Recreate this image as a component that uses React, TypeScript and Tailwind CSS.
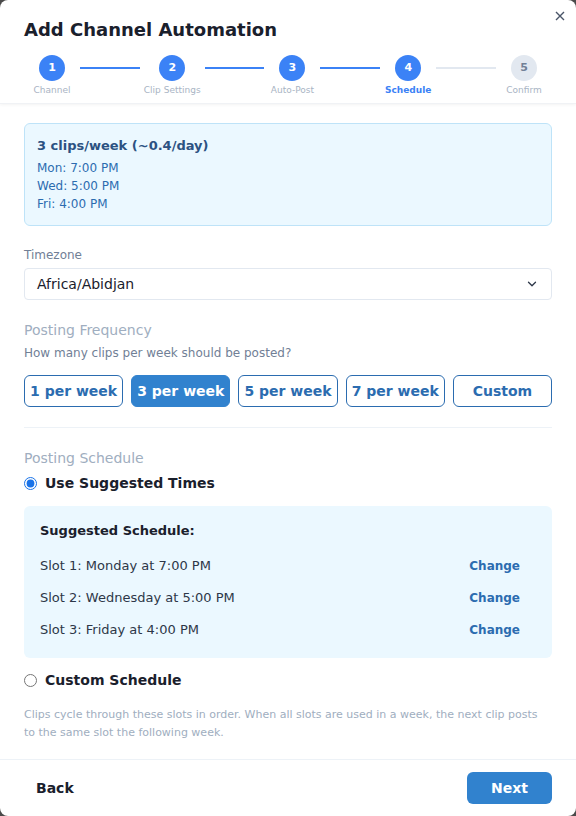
import { ChevronDown } from 'lucide-react';

const steps = [
    { n: 1, label: 'Channel', state: 'done' },
    { n: 2, label: 'Clip Settings', state: 'done' },
    { n: 3, label: 'Auto-Post', state: 'done' },
    { n: 4, label: 'Schedule', state: 'active' },
    { n: 5, label: 'Confirm', state: 'todo' },
];

const frequencies = ['1 per week', '3 per week', '5 per week', '7 per week', 'Custom'];

const slots = [
    'Slot 1: Monday at 7:00 PM',
    'Slot 2: Wednesday at 5:00 PM',
    'Slot 3: Friday at 4:00 PM',
];

const Stepper = () => (
    <div className="mt-[12px] flex items-start">
        {steps.map((s, i) => (
            <div key={s.n} className="contents">
                <div className="flex min-w-14 flex-col items-center px-1">
                    <div
                        className={
                            s.state === 'todo'
                                ? 'flex h-[26px] w-[26px] items-center justify-center rounded-full bg-[#e2e8f0] text-[11px] font-bold text-[#718096]'
                                : 'flex h-[26px] w-[26px] items-center justify-center rounded-full bg-[#3b82f6] text-[11px] font-bold text-white'
                        }
                    >
                        {s.n}
                    </div>
                    <span
                        className={
                            s.state === 'active'
                                ? 'mt-[3px] text-[9px] leading-[12px] font-bold text-[#3b82f6]'
                                : 'mt-[3px] text-[9px] leading-[12px] text-[#a9b4c4]'
                        }
                    >
                        {s.label}
                    </span>
                </div>
                {i < steps.length - 1 && (
                    <div
                        className={
                            i < 3
                                ? 'mt-3 h-[2px] flex-1 bg-[#3b82f6]'
                                : 'mt-3 h-[2px] flex-1 bg-[#e2e8f0]'
                        }
                    />
                )}
            </div>
        ))}
    </div>
);

const Radio = ({ checked, label }: { checked: boolean; label: string }) => (
    <label className="flex items-center gap-2 text-[14px] leading-[20px] font-bold text-[#1a202c]">
        <input type="radio" checked={checked} readOnly className="m-0 h-[13px] w-[13px] accent-[#1a73e8]" />
        {label}
    </label>
);

export default function App() {
    return (
        <div className="min-h-screen bg-[#4a4a4a] font-['DejaVu_Sans',sans-serif]">
            <div className="flex h-[816px] w-[576px] flex-col overflow-hidden rounded-lg bg-white">
                {/* Header */}
                <div className="relative border-b border-[#f0f2f5] px-6 pt-[17px] pb-[7px] shadow-[0_1px_3px_rgba(0,0,0,0.05)]">
                    <h1 className="text-[18px] leading-[26px] font-bold text-[#1a202c]">Add Channel Automation</h1>
                    <button className="absolute top-[11px] right-[11px]">
                        <svg width="10" height="10" viewBox="0 0 10 10">
                            <path d="M1 1L9 9M9 1L1 9" stroke="#4a5568" strokeWidth="1.4" />
                        </svg>
                    </button>
                    <Stepper />
                </div>

                {/* Body */}
                <div className="flex-1 px-6 pt-[19px]">
                    <div className="rounded-md border border-[#bee3f8] bg-[#ebf8ff] px-3 pt-[13px] pb-3">
                        <p className="text-[13px] leading-[18px] font-bold text-[#2c5282]">3 clips/week (~0.4/day)</p>
                        <div className="mt-1 text-[12px] leading-[18px] text-[#2b6cb0]">
                            <p>Mon: 7:00 PM</p>
                            <p>Wed: 5:00 PM</p>
                            <p>Fri: 4:00 PM</p>
                        </div>
                    </div>

                    <p className="mt-5 text-[12px] leading-[18px] text-[#718096]">Timezone</p>
                    <div className="mt-1 flex h-8 items-center justify-between rounded border border-[#e2e8f0] px-3">
                        <span className="text-[14px] text-[#1a202c]">Africa/Abidjan</span>
                        <ChevronDown size={14} strokeWidth={2.25} className="text-[#2d3748]" />
                    </div>

                    <p className="mt-5 text-[14px] leading-[20px] text-[#a0aec0]">Posting Frequency</p>
                    <p className="mt-1 text-[12px] leading-[18px] text-[#718096]">How many clips per week should be posted?</p>
                    <div className="mt-[13px] flex gap-2">
                        {frequencies.map((f) => (
                            <button
                                key={f}
                                className={
                                    f === '3 per week'
                                        ? 'h-8 flex-1 rounded-md border border-[#3182ce] bg-[#3182ce] text-[14px] font-bold text-white'
                                        : 'h-8 flex-1 rounded-md border border-[#2b6cb0] bg-white text-[14px] font-bold text-[#2b6cb0]'
                                }
                            >
                                {f}
                            </button>
                        ))}
                    </div>

                    <div className="mt-5 border-t border-[#edf2f7]" />

                    <p className="mt-5 text-[14px] leading-[20px] text-[#a0aec0]">Posting Schedule</p>
                    <div className="mt-[5px]">
                        <Radio checked label="Use Suggested Times" />
                    </div>

                    <div className="mt-[13px] rounded-md bg-[#ebf8ff] px-4 pt-4 pb-[12px]">
                        <p className="text-[13px] leading-[18px] font-bold text-[#1a202c]">Suggested Schedule:</p>
                        <div className="mt-[10px]">
                            {slots.map((s) => (
                                <div key={s} className="flex h-8 items-center justify-between">
                                    <span className="text-[13px] text-[#2d3748]">{s}</span>
                                    <button className="h-8 px-4 text-[12px] font-bold text-[#2b6cb0]">Change</button>
                                </div>
                            ))}
                        </div>
                    </div>

                    <div className="mt-3">
                        <Radio checked={false} label="Custom Schedule" />
                    </div>

                    <p className="mt-[16px] text-[11px] leading-[18px] text-[#a0aec0]">
                        Clips cycle through these slots in order. When all slots are used in a week, the next clip posts
                        to the same slot the following week.
                    </p>
                </div>

                {/* Footer */}
                <div className="flex items-center justify-between border-t border-[#edf2f7] px-6 py-3">
                    <button className="h-8 px-3 text-[14px] font-bold text-[#1a202c]">Back</button>
                    <button className="h-8 w-[85px] rounded-md bg-[#3182ce] text-[14px] font-bold text-white">Next</button>
                </div>
            </div>
        </div>
    );
}
